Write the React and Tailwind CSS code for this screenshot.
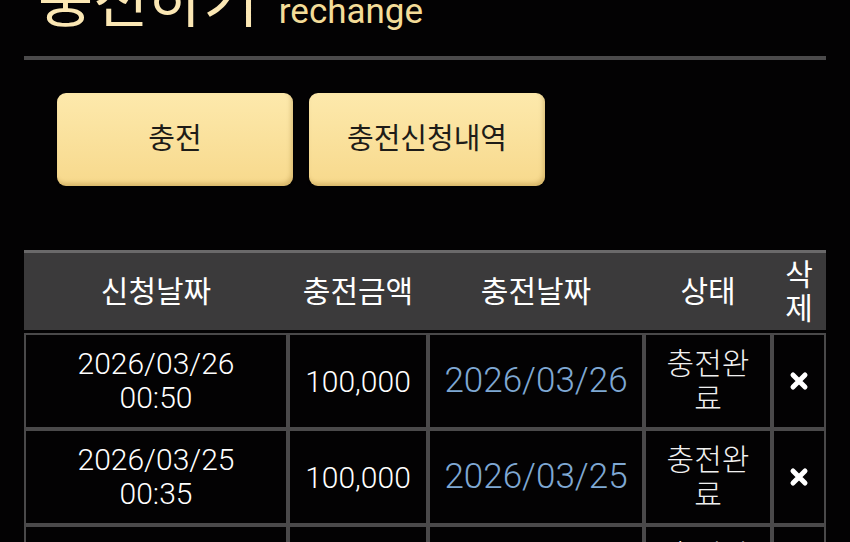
import React from "react";

const rows = [
  { req: "2026/03/26", time: "00:50", amount: "100,000", date: "2026/03/26" },
  { req: "2026/03/25", time: "00:35", amount: "100,000", date: "2026/03/25" },
  { req: "2026/03/24", time: "01:12", amount: "100,000", date: "2026/03/24" },
];

const font = { fontFamily: "Roboto, 'Noto Sans CJK KR', sans-serif" };

const DeleteIcon = () => (
  <svg width="20" height="20" viewBox="0 0 20 20" className="mx-auto">
    <path d="M4 4 L16 16 M16 4 L4 16" stroke="#ffffff" strokeWidth="5" strokeLinecap="round" />
  </svg>
);

export default function App() {
  return (
    <div className="w-[850px] h-[542px] overflow-hidden bg-[#030203]" style={font}>
      {/* Title */}
      <div className="px-[24px]">
        <div className="flex items-end gap-[20px] pl-[14px] h-[82px] -mt-[26px] pb-[24px]">
          <span className="text-[60px] leading-none text-[#fbe7b4]">충전하기</span>
          <span className="text-[35px] leading-none text-[#f3dc98] mb-[3px]">rechange</span>
        </div>
        <div className="h-[4px] bg-[#4b4a4b]" />
      </div>

      {/* Buttons */}
      <div className="flex gap-[16px] pl-[57px] mt-[33px]">
        <button className="w-[236px] h-[93px] rounded-[9px] bg-gradient-to-b from-[#fde9ac] to-[#f7d98c] shadow-[inset_-2px_-3px_4px_rgba(120,80,0,0.25),0_2px_2px_rgba(0,0,0,0.6)] text-[29px] text-[#1e1c18]">
          충전
        </button>
        <button className="w-[236px] h-[93px] rounded-[9px] bg-gradient-to-b from-[#fde9ac] to-[#f7d98c] shadow-[inset_-2px_-3px_4px_rgba(120,80,0,0.25),0_2px_2px_rgba(0,0,0,0.6)] text-[29px] text-[#1e1c18]">
          충전신청내역
        </button>
      </div>

      {/* Table */}
      <div className="px-[24px] mt-[64px]">
        <table className="w-[802px] table-fixed border-separate border-spacing-0">
          <colgroup>
            <col className="w-[264px]" />
            <col className="w-[140px]" />
            <col className="w-[216px]" />
            <col className="w-[128px]" />
            <col className="w-[54px]" />
          </colgroup>
          <thead>
            <tr className="text-[30px] text-white">
              <th className="h-[80px] bg-[#3b3a3b] border-t-[3px] border-[#6a696a] font-normal">신청날짜</th>
              <th className="h-[80px] bg-[#3b3a3b] border-t-[3px] border-[#6a696a] font-normal">충전금액</th>
              <th className="h-[80px] bg-[#3b3a3b] border-t-[3px] border-[#6a696a] font-normal">충전날짜</th>
              <th className="h-[80px] bg-[#3b3a3b] border-t-[3px] border-[#6a696a] font-normal">상태</th>
              <th className="h-[80px] bg-[#3b3a3b] border-t-[3px] border-[#6a696a] font-normal leading-[34px]">
                삭<br />제
              </th>
            </tr>
            <tr>
              <td colSpan={5} className="h-[3px]" />
            </tr>
          </thead>
          <tbody>
            {rows.map((r) => (
              <tr key={r.req} className="text-center">
                <td className="h-[96px] border-2 border-[#4a494a] text-[30px] font-light leading-[34px] text-white">
                  {r.req}
                  <br />
                  {r.time}
                </td>
                <td className="h-[96px] border-2 border-[#4a494a] text-[30px] font-light text-white">{r.amount}</td>
                <td className="h-[96px] border-2 border-[#4a494a] text-[35px] font-light text-[#7fa8d3]">{r.date}</td>
                <td className="h-[96px] border-2 border-[#4a494a] text-[30px] font-light leading-[35px] text-[#f0f0f0]">
                  충전완
                  <br />료
                </td>
                <td className="h-[96px] border-2 border-[#4a494a]">
                  <DeleteIcon />
                </td>
              </tr>
            ))}
          </tbody>
        </table>
      </div>
    </div>
  );
}
